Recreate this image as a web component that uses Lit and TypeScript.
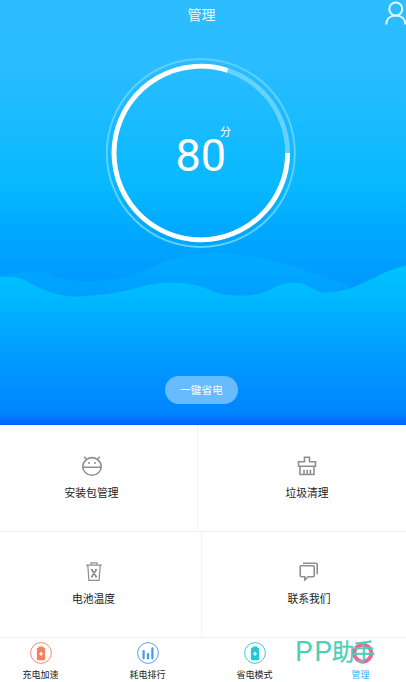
import { LitElement, html, svg, css } from "lit";
import { customElement } from "lit/decorators.js";

const tiles = [
  {
    label: "安装包管理",
    icon: svg`<path d="M5.600 4.500C8.500 2 13.500 2 16.400 4.500C19 6.500 20.200 9 20.200 11.700A9.200 8.600 0 0 1 1.800 11.700C1.800 9 3 6.500 5.600 4.500zM3.200 1.800L5.800 4.500M18.800 1.800L16.200 4.500M2.500 12.300h17"/><path d="M7 8h2M13 8h2" stroke-width="1.700"/>`,
  },
  {
    label: "垃圾清理",
    icon: svg`<path d="M8.500 2.200h5v4.600h6v4.500h-17V6.800h6z M4 11.300v8.200h14v-8.200 M8 19v-4.200M11.200 19v-4.200M14.400 19v-4.200"/>`,
  },
  {
    label: "电池温度",
    icon: svg`<path d="M3 4.200h16M8 4V1.800h6V4M4.800 4.400l1.100 15h10.200l1.100-15" stroke-width="1.200"/><path d="M8.800 8.800l4.400 7M13.200 8.800l-4.400 7M8 8.800h2M12 8.800h2M8 15.800h2M12 15.800h2"/>`,
  },
  {
    label: "联系我们",
    icon: svg`<path d="M2.200 5.800q0-1 1-1h12q1 0 1 1v9q0 1-1 1h-5l-3.400 3v-3H3.200q-1 0-1-1z"/><path d="M5 2.200h13q1.200 0 1.200 1.200v9.800"/>`,
  },
];

const battery = svg`<path d="M8.700 4.500h4.600v1.200h1q.8 0 .8.8v11q0 .8-.8.8H7.700q-.8 0-.8-.8v-11q0-.8.8-.8h1z" fill="currentColor"/><path d="M11 9.800v4M9.200 11.800h3.600" stroke="#fff" stroke-width="1.200"/>`;
const ring = svg`<circle cx="11" cy="11" r="10.400" fill="none" stroke="currentColor" stroke-width=".9"/>`;

const tabs = [
  { label: "充电加速", tone: "coral", icon: svg`${ring}${battery}` },
  {
    label: "耗电排行",
    tone: "blue",
    icon: svg`${ring}<path d="M6.600 9v7.300M11 12v4.300M15.400 6.300v10" stroke="currentColor" stroke-width="2.200" stroke-linecap="round"/>`,
  },
  { label: "省电模式", tone: "teal", icon: svg`${ring}${battery}` },
  {
    label: "管理",
    tone: "pink",
    icon: svg`<circle cx="12.800" cy="11.200" r="8.500" fill="none" stroke="currentColor" stroke-width="4"/>`,
  },
];

@customElement("app-root")
export class AppRoot extends LitElement {
  static styles = css`
    :host {
      display: flex;
      flex-direction: column;
      width: 406px;
      height: 682px;
      overflow: hidden;
      position: relative;
      background: #fff;
      font-family: "Noto Sans CJK SC", sans-serif;
    }
    svg { display: block; }
    .hero {
      position: relative;
      height: 425px;
      flex: none;
      display: flex;
      flex-direction: column;
      align-items: center;
      color: #fff;
    }
    .sea { position: absolute; inset: 0; }
    .title {
      position: relative;
      height: 28px;
      line-height: 28px;
      font-size: 14px;
      margin-right: 3px;
      opacity: 0.9;
    }
    .user { position: absolute; right: 0; top: 0; }
    .gauge {
      position: relative;
      margin: 30px 4px 0 0;
      width: 190px;
      height: 190px;
    }
    .score {
      position: absolute;
      left: 69.5px;
      top: 81px;
      font: 45px/34px Roboto, sans-serif;
    }
    .unit {
      position: absolute;
      left: 114px;
      top: 67px;
      font-size: 11px;
      line-height: 13px;
    }
    .save {
      position: relative;
      margin: 128px 3px 0 0;
      width: 73px;
      height: 28px;
      border: 0;
      padding: 0;
      border-radius: 14px;
      background: #67bbff;
      color: #fff;
      font: 10.7px/28px "Noto Sans CJK SC", sans-serif;
    }
    .row { display: grid; box-sizing: border-box; border-bottom: 1px solid #f1f1f1; }
    .row1 { height: 107px; grid-template-columns: 198px 208px; }
    .row2 { height: 106px; grid-template-columns: 202px 204px; }
    .tile {
      display: flex;
      flex-direction: column;
      align-items: center;
      box-sizing: border-box;
      padding-top: 30px;
      font-size: 10.8px;
      line-height: 16px;
      color: #222;
      gap: 7px;
    }
    .tile svg { fill: none; stroke: #8f8f8f; stroke-width: 1.6; }
    .tile:first-child { border-right: 1px solid #f3f3f3; padding-right: 14px; }
    .tile:last-child { padding-left: 10px; }
    .row2 .tile { padding-top: 29px; }
    .tabs {
      flex: 1;
      display: grid;
      grid-template-columns: 107px 107px 107px 107px;
      margin-left: -13px;
    }
    .tab {
      display: flex;
      flex-direction: column;
      align-items: center;
      padding-top: 4px;
      gap: 4px;
    }
    .name { font-size: 9px; line-height: 14px; color: #222; }
    .coral { color: #fb7e5f; }
    .blue { color: #459be8; }
    .teal { color: #23c8d8; }
    .pink { color: #f0649b; padding-right: 2px; }
    .pink .name { color: #35b5f5; }
    .mark { position: absolute; left: 294px; top: 634px; fill: #4ccfb5; }
    .latin { font: 400 28px Roboto, sans-serif; }
    .han { font: 400 22.5px "Noto Sans CJK SC", sans-serif; stroke: #4ccfb5; stroke-width: 0.3; }
  `;

  render() {
    return html`
      <section class="hero">
        <svg class="sea" width="406" height="425">
          <defs>
            <linearGradient id="sky" x2="0" y2="425" gradientUnits="userSpaceOnUse">
              <stop offset="0" stop-color="#2dbdff" />
              <stop offset=".16" stop-color="#29bcff" />
              <stop offset=".43" stop-color="#08b9ff" />
              <stop offset=".54" stop-color="#00a9ff" />
              <stop offset=".7" stop-color="#0095ff" />
            </linearGradient>
            <linearGradient id="back" x2="0" y1="254" y2="300" gradientUnits="userSpaceOnUse">
              <stop stop-color="#00acff" />
              <stop offset="1" stop-color="#009dff" />
            </linearGradient>
            <linearGradient id="front" x2="0" y1="265" y2="425" gradientUnits="userSpaceOnUse">
              <stop stop-color="#00c3ff" />
              <stop offset=".2" stop-color="#00b9ff" />
              <stop offset=".5" stop-color="#00a0ff" />
              <stop offset=".93" stop-color="#0084ff" />
              <stop offset="1" stop-color="#0062ff" />
            </linearGradient>
          </defs>
          <rect width="406" height="425" fill="url(#sky)" />
          <path fill="url(#back)" d="M0 277C20 271 40 271 50 274C65 281 85 282 100 281C125 279 140 273 160 264C180 255 205 253 225 254C265 255 295 266 350 286V310H0Z" />
          <path fill="url(#front)" d="M0 277C15 276 22 278 32 284C45 291 60 297 78 296.500C95 296 125 292 140 287C160 281 185 281 203 287C215 293 220 295 240 295.500C262 295 268 291 277 286C290 281 302 282 310 287C318 292 322 293 330 292.500C360 290 375 273 406 265.500V425H0Z" />
        </svg>
        <div class="title">管理</div>
        <svg class="user" width="22" height="26" fill="none" stroke="#e2f6ff" stroke-width="2">
          <circle cx="11.800" cy="9" r="6.500" />
          <path d="M2.300 24.500C2.300 19 6 15.500 11.800 15.500S21.300 19 21.300 24.500" />
        </svg>
        <div class="gauge">
          <svg width="190" height="190" fill="none">
            <circle cx="94.800" cy="95" r="94" stroke="#62d0ff" stroke-width="1.900" />
            <circle cx="94.800" cy="95" r="86.800" stroke="#66d2ff" stroke-width="4.800" />
            <path d="M181.600 95A86.800 86.800 0 1 1 121.600 12.450" stroke="#fff" stroke-width="4.800" />
          </svg>
          <div class="score">80</div>
          <span class="unit">分</span>
        </div>
        <button class="save">一键省电</button>
      </section>
      ${[0, 1].map(
        (r) => html`<section class="row row${r + 1}">
          ${tiles.slice(r * 2, r * 2 + 2).map(
            (t) => html`<div class="tile"><svg width="22" height="22">${t.icon}</svg><span>${t.label}</span></div>`
          )}
        </section>`
      )}
      <nav class="tabs">
        ${tabs.map(
          (t) => html`<div class="tab ${t.tone}"><svg width="22" height="22" overflow="visible">${t.icon}</svg><span class="name">${t.label}</span></div>`
        )}
      </nav>
      <svg class="mark" width="84" height="34">
        <text class="latin" x="1" y="27" textLength="37">PP</text>
        <text class="han" x="38" y="26" textLength="43">助手</text>
      </svg>
    `;
  }
}
